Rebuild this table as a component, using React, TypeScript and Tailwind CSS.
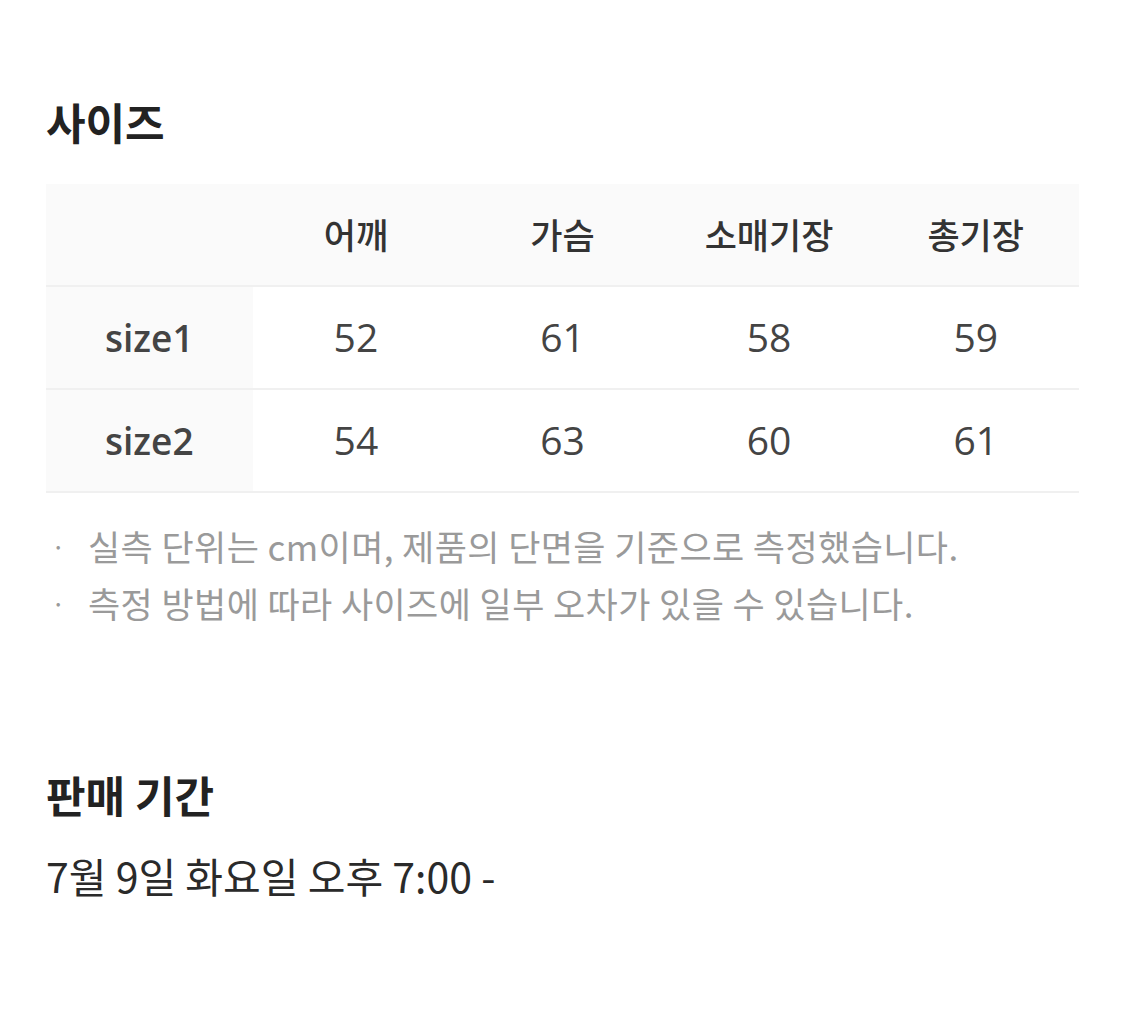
const HEADERS = ['', '어깨', '가슴', '소매기장', '총기장'];

const ROWS = [
    { name: 'size1', values: [52, 61, 58, 59] },
    { name: 'size2', values: [54, 63, 60, 61] },
];

const NOTES = [
    '실측 단위는 cm이며, 제품의 단면을 기준으로 측정했습니다.',
    '측정 방법에 따라 사이즈에 일부 오차가 있을 수 있습니다.',
];

export default function App() {
    return (
        <div className="min-h-[1030px] w-[1125px] bg-white px-[46px] pt-[95px] text-[#222] [font-family:'Noto_Sans_CJK_KR',sans-serif]">
            <h2 className="text-[43px] font-bold leading-[52px]">사이즈</h2>

            <table className="mt-[37px] w-[1033px] table-fixed border-collapse">
                <thead>
                <tr className="h-[102px] border-b-2 border-[#f0f0f0] bg-[#fafafa]">
                    {HEADERS.map((h, i) => (
                        <th key={i} className="text-center text-[35px] font-medium text-[#333]">
                            {h}
                        </th>
                    ))}
                </tr>
                </thead>
                <tbody>
                {ROWS.map((row) => (
                    <tr key={row.name} className="h-[103px] border-b-2 border-[#f0f0f0]">
                        <td className="bg-[#fafafa] text-center text-[37px] font-semibold text-[#444] [font-family:'Open_Sans',sans-serif]">
                            {row.name}
                        </td>
                        {row.values.map((v, i) => (
                            <td key={i} className="text-center text-[39px] text-[#444] [font-family:'Open_Sans',sans-serif]">
                                {v}
                            </td>
                        ))}
                    </tr>
                ))}
                </tbody>
            </table>

            <ul className="mt-[29px] flex flex-col gap-[9px]">
                {NOTES.map((n) => (
                    <li key={n} className="flex items-center text-[35px] leading-[48px] tracking-[0.4px] text-[#9a9a9a]">
                        <span className="w-[42px] pl-[5px] text-[26px]">·</span>
                        <span>{n}</span>
                    </li>
                ))}
            </ul>

            <h2 className="mt-[141px] text-[43px] font-bold leading-[52px]">판매 기간</h2>
            <p className="mt-[31px] text-[41px] leading-[48px] text-[#2a2a2a]">7월 9일 화요일 오후 7:00 -</p>
        </div>
    );
}
